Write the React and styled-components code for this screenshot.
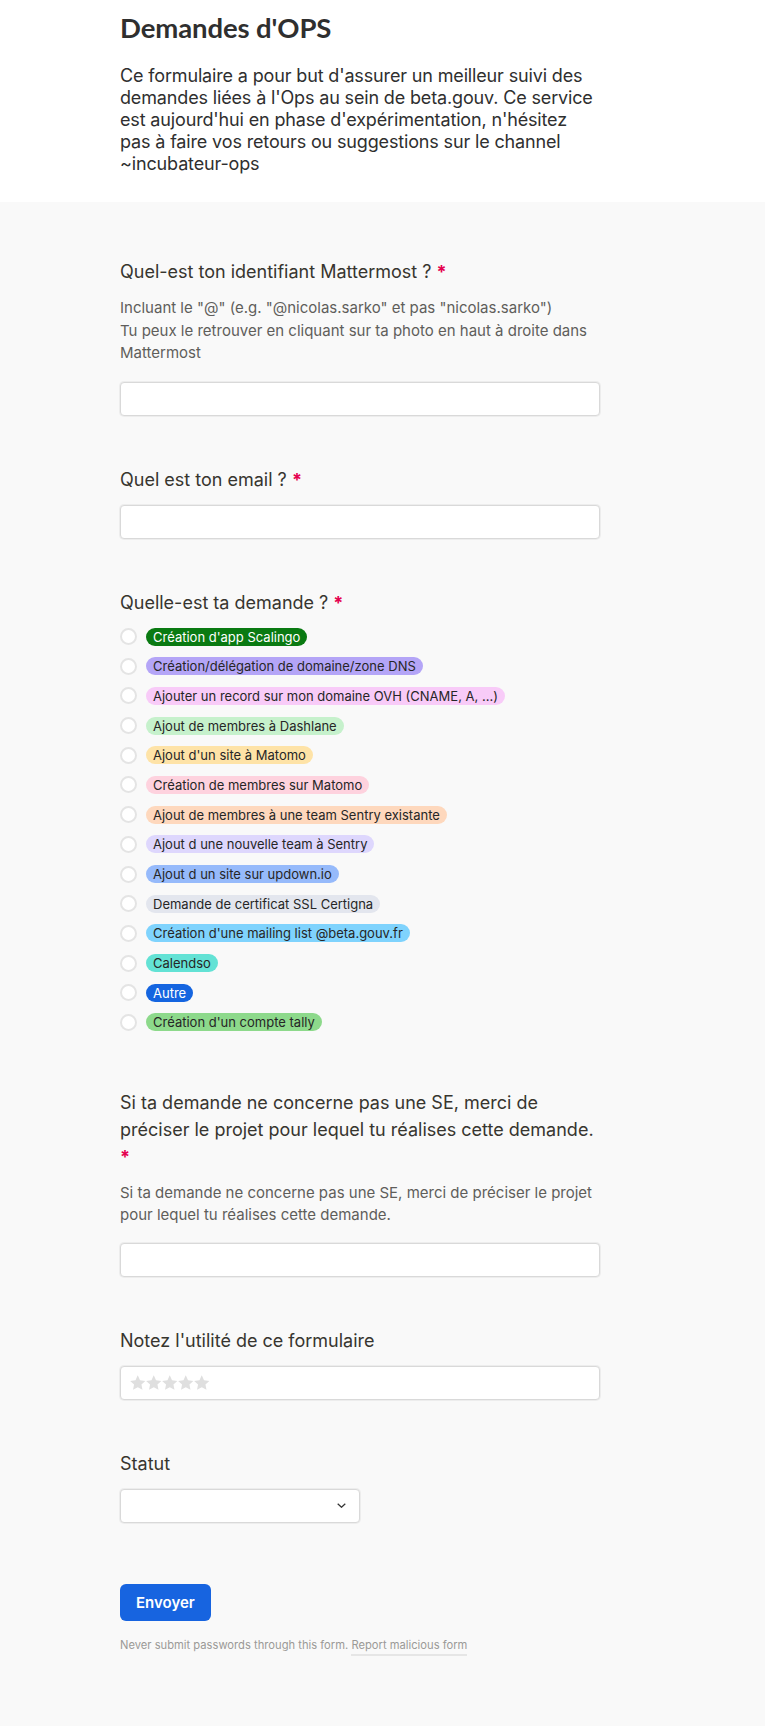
import React from "react";
import styled, { createGlobalStyle } from "styled-components";

const Global = createGlobalStyle`
  html, body {
    margin: 0;
    padding: 0;
    background: #ffffff;
  }
  body {
    font-family: Inter, "Noto Sans", "Liberation Sans", sans-serif;
    color: #37352f;
  }
  * { box-sizing: border-box; }
`;

const Header = styled.header`
  background: #ffffff;
  padding: 12px 0 27px;
`;

const Column = styled.div`
  margin-left: 120px;
  width: 480px;
`;

const Title = styled.h1`
  margin: 0;
  font-family: Lato, Inter, sans-serif;
  font-weight: 700;
  font-size: 27.5px;
  line-height: 31px;
  color: #2f2f2f;
  letter-spacing: -0.1px;
`;

const Intro = styled.p`
  margin: 22px 0 0;
  font-size: 18px;
  line-height: 22px;
  letter-spacing: -0.15px;
  color: #2f2f2f;
`;

const FormArea = styled.main`
  background: #f9f9f9;
  padding: 56px 0 70px;
`;

const Field = styled.section`
  margin-bottom: ${(p) => p.$after ?? 50}px;
`;

const Label = styled.h3`
  margin: 0;
  font-size: 18px;
  font-weight: 400;
  line-height: 27px;
  color: #37352f;
`;

const Star = styled.span`
  color: #e5004f;
  font-weight: 700;
`;

const Help = styled.p`
  margin: 12px 0 0;
  font-size: 15px;
  line-height: 22.5px;
  color: #5f5e5b;
`;

const Input = styled.input`
  display: block;
  width: 480px;
  height: 34px;
  margin-top: ${(p) => p.$top || 12}px;
  border: 1px solid #d9d9d9;
  box-shadow: 0 0 0 1px #ededed;
  border-radius: 4px;
  background: #ffffff;
  outline: none;
`;

const RatingBox = styled.div`
  display: flex;
  align-items: center;
  gap: 0.5px;
  width: 480px;
  height: 34px;
  margin-top: 12px;
  padding-left: 9px;
  border: 1px solid #d9d9d9;
  box-shadow: 0 0 0 1px #ededed;
  border-radius: 4px;
  background: #ffffff;
`;

const SelectBox = styled.div`
  display: flex;
  align-items: center;
  justify-content: flex-end;
  width: 240px;
  height: 34px;
  margin-top: 12px;
  padding-right: 13px;
  border: 1px solid #d9d9d9;
  box-shadow: 0 0 0 1px #ededed;
  border-radius: 4px;
  background: #ffffff;
`;

const Options = styled.div`
  display: flex;
  flex-direction: column;
  gap: 7.7px;
  margin-top: 10px;
`;

const Option = styled.label`
  display: flex;
  align-items: center;
  height: 22px;
  gap: 9px;
`;

const Radio = styled.span`
  width: 17px;
  height: 17px;
  border-radius: 50%;
  background: #ffffff;
  border: 2px solid #e4e4e4;
  flex-shrink: 0;
`;

const Pill = styled.span`
  display: inline-flex;
  align-items: center;
  height: 18px;
  padding: 0 7px;
  border-radius: 9px;
  font-size: 13px;
  line-height: 18px;
  white-space: nowrap;
  background: ${(p) => p.$bg};
  color: ${(p) => p.$fg || "#262626"};
`;

const SubmitButton = styled.button`
  display: block;
  height: 37px;
  padding: 0 16px;
  border: none;
  border-radius: 6px;
  background: #1764e0;
  color: #ffffff;
  font-family: inherit;
  font-size: 15px;
  font-weight: 600;
`;

const Footer = styled.p`
  margin: 15px 0 0;
  font-size: 11.2px;
  line-height: 18px;
  color: #9b9a97;
`;

const ReportLink = styled.span`
  display: inline-block;
  border-bottom: 2px solid #e6e6e6;
  line-height: 18px;
`;

const options = [
  { text: "Création d'app Scalingo", bg: "#0a7a12", fg: "#ffffff" },
  { text: "Création/délégation de domaine/zone DNS", bg: "#b4a5f7" },
  { text: "Ajouter un record sur mon domaine OVH (CNAME, A, ...)", bg: "#f8cbf8" },
  { text: "Ajout de membres à Dashlane", bg: "#c6f1cc" },
  { text: "Ajout d'un site à Matomo", bg: "#fee3a7" },
  { text: "Création de membres sur Matomo", bg: "#fed2de" },
  { text: "Ajout de membres à une team Sentry existante", bg: "#fed8bd" },
  { text: "Ajout d une nouvelle team à Sentry", bg: "#ded7fd" },
  { text: "Ajout d un site sur updown.io", bg: "#96bafb" },
  { text: "Demande de certificat SSL Certigna", bg: "#e3e6ee" },
  { text: "Création d'une mailing list @beta.gouv.fr", bg: "#7fd3fd" },
  { text: "Calendso", bg: "#63e2d5" },
  { text: "Autre", bg: "#1565e0", fg: "#ffffff" },
  { text: "Création d'un compte tally", bg: "#8dd98b" },
];

const StarIcon = () => (
  <svg width="15.5" height="15" viewBox="1.5 1.5 21 20">
    <path
      d="M12 1.8l3.1 6.6 7.2.9-5.3 5 1.4 7.1L12 17.9l-6.4 3.5 1.4-7.1-5.3-5 7.2-.9z"
      fill="#dfdfdf"
    />
  </svg>
);

const Chevron = () => (
  <svg width="9" height="5" viewBox="0 0 9 5">
    <path d="M0.7 0.7l3.8 3.6 3.8-3.6" fill="none" stroke="#333" strokeWidth="1.2" />
  </svg>
);

const Required = () => (
  <>
    {" "}
    <Star>*</Star>
  </>
);

export default function App() {
  return (
    <>
      <Global />
      <Header>
        <Column>
          <Title>Demandes d'OPS</Title>
          <Intro>
            Ce formulaire a pour but d'assurer un meilleur suivi des demandes
            liées à l'Ops au sein de beta.gouv. Ce service est aujourd'hui en
            phase d'expérimentation, n'hésitez pas à faire vos retours ou
            suggestions sur le channel ~incubateur-ops
          </Intro>
        </Column>
      </Header>
      <FormArea>
        <Column>
          <Field>
            <Label>
              Quel-est ton identifiant Mattermost ?<Required />
            </Label>
            <Help>
              Incluant le "@" (e.g. "@nicolas.sarko" et pas "nicolas.sarko")
              <br />
              Tu peux le retrouver en cliquant sur ta photo en haut à droite
              dans Mattermost
            </Help>
            <Input $top={17} />
          </Field>

          <Field>
            <Label>
              Quel est ton email ?<Required />
            </Label>
            <Input />
          </Field>

          <Field $after={55.5}>
            <Label>
              Quelle-est ta demande ?<Required />
            </Label>
            <Options>
              {options.map((o) => (
                <Option key={o.text}>
                  <Radio />
                  <Pill $bg={o.bg} $fg={o.fg}>
                    {o.text}
                  </Pill>
                </Option>
              ))}
            </Options>
          </Field>

          <Field>
            <Label>
              Si ta demande ne concerne pas une SE, merci de préciser le projet
              pour lequel tu réalises cette demande.
              <br />
              <Star>*</Star>
            </Label>
            <Help>
              Si ta demande ne concerne pas une SE, merci de préciser le projet
              pour lequel tu réalises cette demande.
            </Help>
            <Input $top={16} />
          </Field>

          <Field>
            <Label>Notez l'utilité de ce formulaire</Label>
            <RatingBox>
              {[0, 1, 2, 3, 4].map((i) => (
                <StarIcon key={i} />
              ))}
            </RatingBox>
          </Field>

          <Field $after={61}>
            <Label>Statut</Label>
            <SelectBox>
              <Chevron />
            </SelectBox>
          </Field>

          <SubmitButton>Envoyer</SubmitButton>
          <Footer>
            Never submit passwords through this form.{" "}
            <ReportLink>Report malicious form</ReportLink>
          </Footer>
        </Column>
      </FormArea>
    </>
  );
}
